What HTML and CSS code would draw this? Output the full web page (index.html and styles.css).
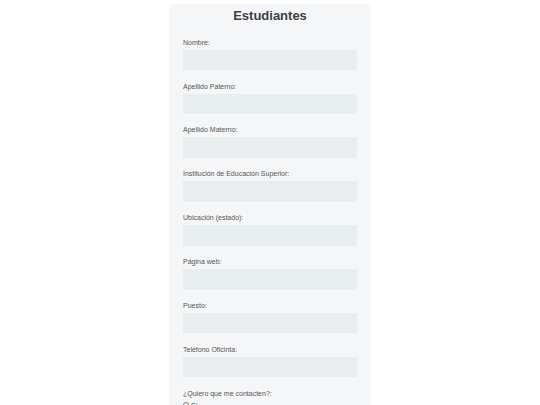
FILE: index.html
```html
<!doctype html>
<html lang="es">
<head>
	<meta charset="UTF-8">
	<title>Estudiantes</title>
	<link rel="stylesheet" href="styles.css">
</head>
<body>
	<form class="card">
		<h1 class="title">Estudiantes</h1>
		<div class="field">
			<label for="nombre">Nombre:</label>
			<input type="text" id="nombre">
		</div>
		<div class="field">
			<label for="paterno">Apellido Paterno:</label>
			<input type="text" id="paterno">
		</div>
		<div class="field">
			<label for="materno">Apellido Materno:</label>
			<input type="text" id="materno">
		</div>
		<div class="field">
			<label for="ies">Institución de Educación Superior:</label>
			<input type="text" id="ies">
		</div>
		<div class="field">
			<label for="estado">Ubicación (estado):</label>
			<input type="text" id="estado">
		</div>
		<div class="field">
			<label for="web">Página web:</label>
			<input type="text" id="web">
		</div>
		<div class="field">
			<label for="puesto">Puesto:</label>
			<input type="text" id="puesto">
		</div>
		<div class="field">
			<label for="tel">Teléfono Oficinta:</label>
			<input type="text" id="tel">
		</div>
		<div class="field">
			<label>¿Quiero que me contacten?:</label>
			<div class="option"><input type="radio" name="contacto" id="si"><span>Sí</span></div>
			<div class="option"><input type="radio" name="contacto" id="no"><span>No</span></div>
		</div>
	</form>
</body>
</html>
```

FILE: styles.css
```css
html,
body{
	height: 100%;
	overflow: hidden;
}
body{
	margin: 0;
	background: #fff;
	font-family: "Liberation Sans", Arial, sans-serif;
	color: #555;
}
.card{
	width: 202px;
	margin: 4px auto 0;
	padding: 4px 14px 20px;
	box-sizing: border-box;
	background: #f5f6f7;
	border-radius: 4px;
}
.title{
	margin: 0 0 13.8px;
	font-size: 13px;
	line-height: 16px;
	font-weight: bold;
	text-align: center;
	color: #3b4046;
}
.field{
	margin-bottom: 11.35px;
}
.field label{
	display: block;
	font-size: 7px;
	line-height: 9px;
	margin-bottom: 3px;
	color: #555;
}
.field input[type=text]{
	display: block;
	width: 100%;
	height: 20.5px;
	margin: 0;
	padding: 0;
	border: none;
	background: #e8edee;
	box-sizing: border-box;
}
.option{
	display: flex;
	align-items: center;
	gap: 2px;
	font-size: 7px;
	line-height: 9px;
}
.option input{
	width: 6px;
	height: 6px;
	margin: 0;
}
```
